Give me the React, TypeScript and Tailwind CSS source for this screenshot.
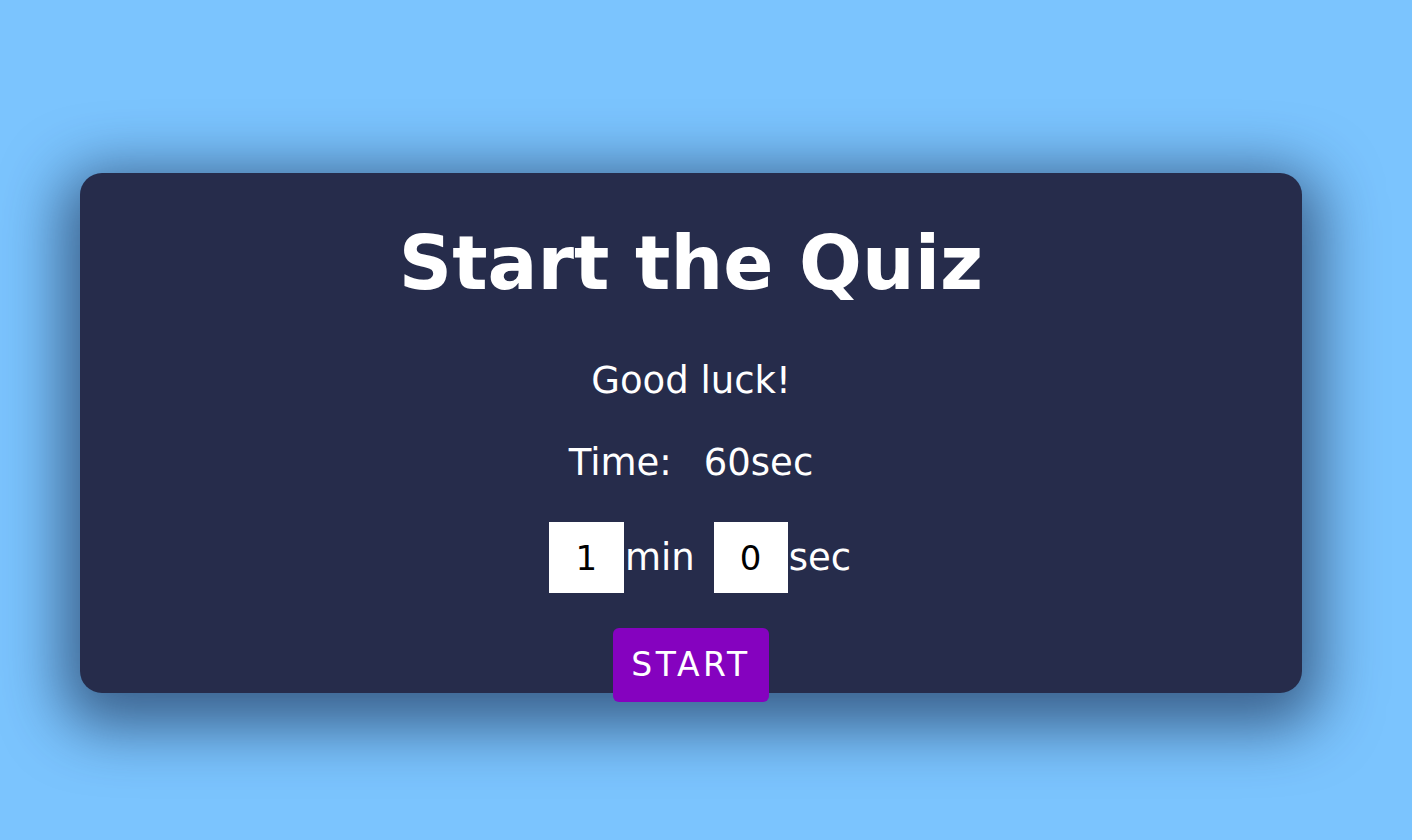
export default function App() {
  return (
    <div className="min-h-[840px] w-full bg-[#7bc4fe] pt-[173px] font-['DejaVu_Sans',Verdana,sans-serif]">
      <div className="ml-[80px] flex h-[520px] w-[1222px] flex-col items-center rounded-[22px] bg-[#262c4b] text-white shadow-[0_16px_60px_18px_rgba(25,45,80,0.65)]">
        <h1 className="mt-[45px] text-[74px] font-bold leading-[90px]">Start the Quiz</h1>
        <p className="mt-[51px] text-[37px] leading-[44px]">Good luck!</p>
        <p className="mt-[38px] flex gap-[32px] text-[37px] leading-[44px]">
          <span>Time:</span>
          <span>60sec</span>
        </p>
        {/* min / sec inputs */}
        <div className="mt-[37px] ml-[18px] flex items-center text-[37px]">
          <input
            defaultValue="1"
            className="h-[71px] w-[75px] bg-white text-center text-[34px] text-black outline-none"
          />
          <span className="ml-[1px]">min</span>
          <input
            defaultValue="0"
            className="ml-[19px] h-[71px] w-[74px] bg-white text-center text-[34px] text-black outline-none"
          />
          <span className="ml-[1px]">sec</span>
        </div>
        <button className="mt-[35px] h-[74px] w-[156px] shrink-0 rounded-[6px] bg-[#8502bf] text-[33px] tracking-[3.5px] text-white">
          START
        </button>
      </div>
    </div>
  );
}
